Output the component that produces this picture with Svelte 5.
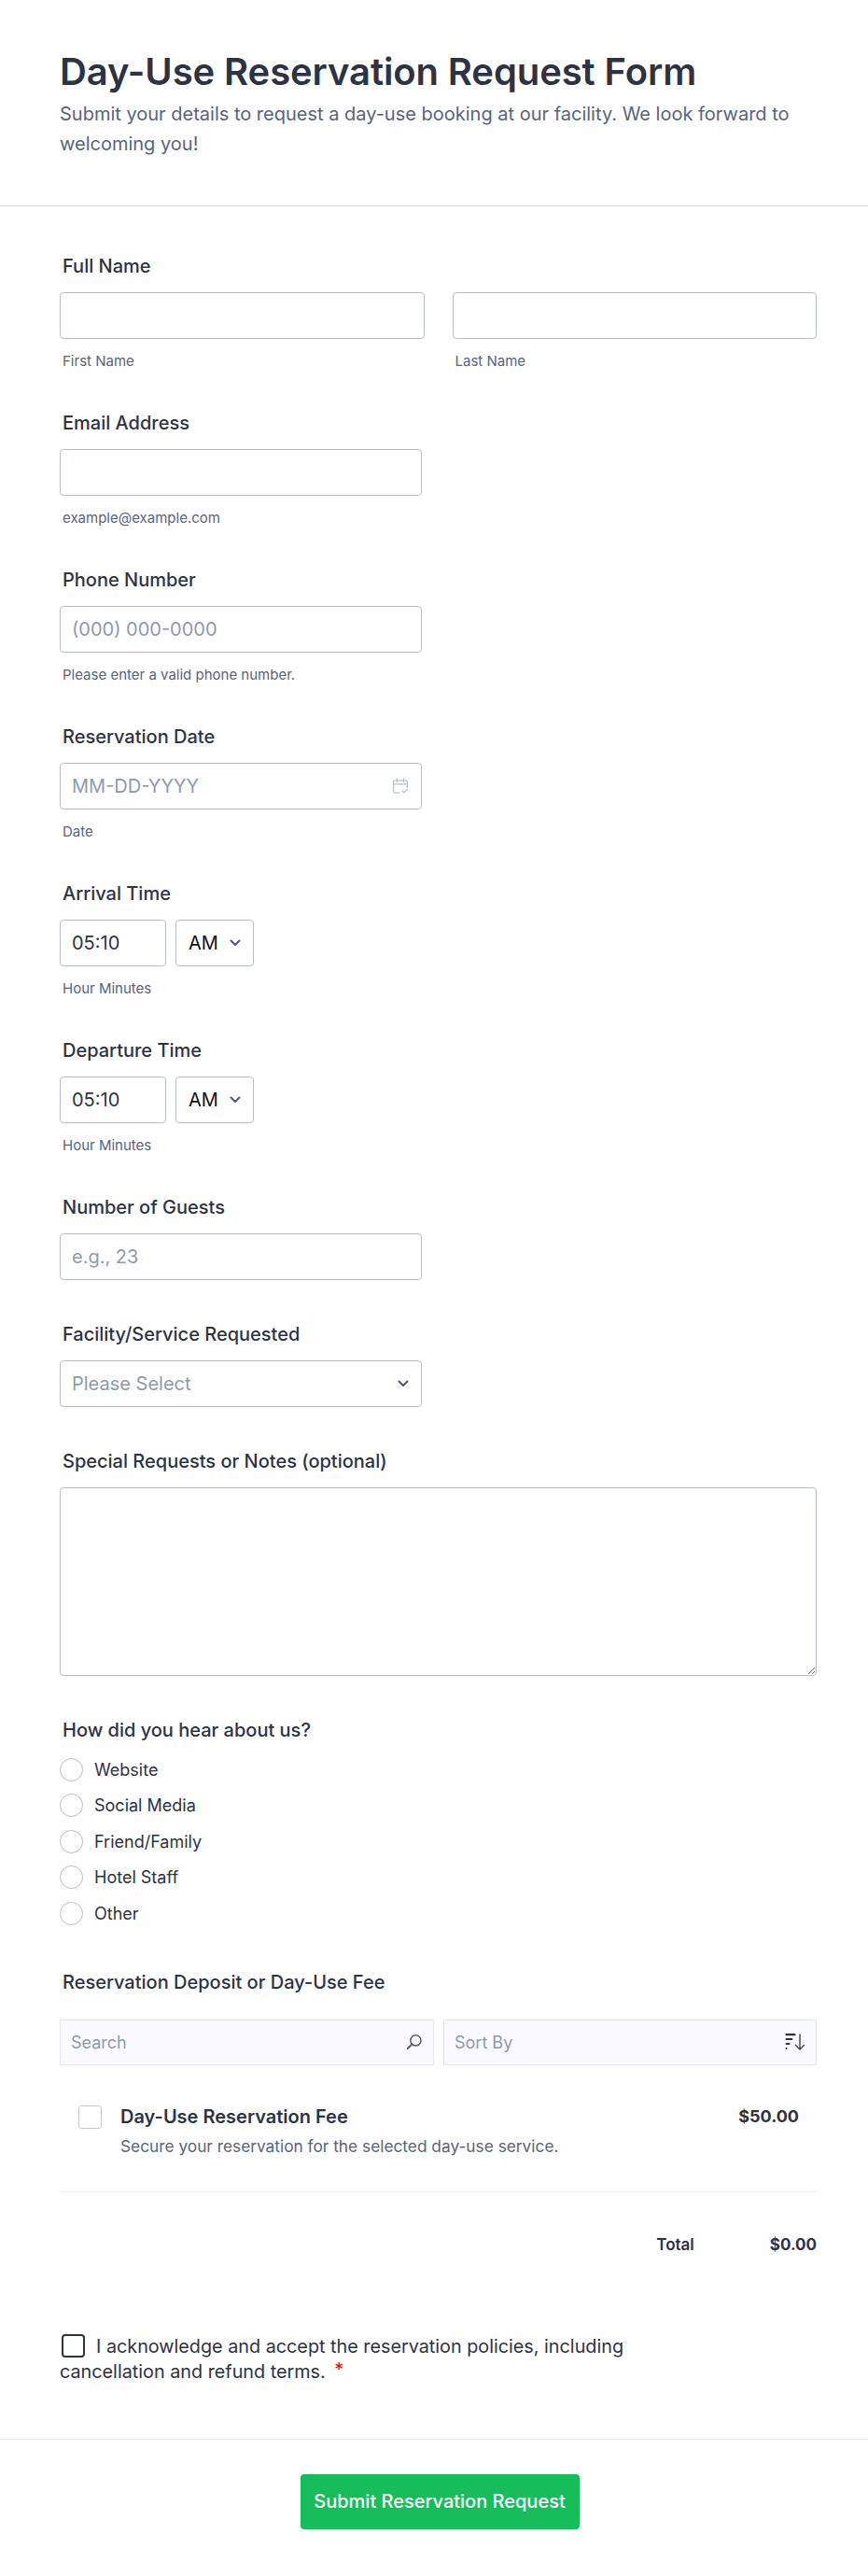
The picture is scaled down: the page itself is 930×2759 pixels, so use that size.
<script>
  const sources = ['Website', 'Social Media', 'Friend/Family', 'Hotel Staff', 'Other'];
  const times = ['Arrival Time', 'Departure Time'];
</script>

<div class="page">
  <header class="head">
    <h1>Day-Use Reservation Request Form</h1>
    <p>Submit your details to request a day-use booking at our facility. We look forward to welcoming you!</p>
  </header>

  <form class="form">
    <div class="field">
      <div class="label">Full Name</div>
      <div class="name-row">
        <div class="name-col">
          <input type="text" />
          <div class="sub">First Name</div>
        </div>
        <div class="name-col">
          <input type="text" />
          <div class="sub">Last Name</div>
        </div>
      </div>
    </div>

    <div class="field">
      <div class="label">Email Address</div>
      <input class="half" type="text" />
      <div class="sub">example@example.com</div>
    </div>

    <div class="field">
      <div class="label">Phone Number</div>
      <input class="half" type="text" placeholder="(000) 000-0000" />
      <div class="sub">Please enter a valid phone number.</div>
    </div>

    <div class="field">
      <div class="label">Reservation Date</div>
      <div class="half wrap">
        <input type="text" placeholder="MM-DD-YYYY" />
        <svg class="cal" width="18" height="18" viewBox="0 0 18 18" fill="none" stroke="#b9c1d0" stroke-width="1.3" stroke-linecap="round" stroke-linejoin="round">
          <path d="M8 16.2H3.2a1.6 1.6 0 0 1-1.6-1.6V4.4a1.6 1.6 0 0 1 1.6-1.6h11.6a1.6 1.6 0 0 1 1.6 1.6v6" />
          <path d="M1.6 6.8h14.8M5.4 1v3.4M12.6 1v3.4" />
          <path d="M11 14l1.8 1.8L16.4 12.6" />
        </svg>
      </div>
      <div class="sub">Date</div>
    </div>

    {#each times as title}
      <div class="field">
        <div class="label">{title}</div>
        <div class="time-row">
          <input class="time" type="text" value="05:10" />
          <div class="ampm wrap">
            <span>AM</span>
            <svg class="chev" width="12" height="8" viewBox="0 0 12 8" fill="none" stroke="#4d5a74" stroke-width="2" stroke-linecap="round" stroke-linejoin="round">
              <path d="M1.5 1.5 6 6l4.5-4.5" />
            </svg>
          </div>
        </div>
        <div class="sub">Hour Minutes</div>
      </div>
    {/each}

    <div class="field">
      <div class="label">Number of Guests</div>
      <input class="half" type="text" placeholder="e.g., 23" />
    </div>

    <div class="field">
      <div class="label">Facility/Service Requested</div>
      <div class="half wrap select">
        <span>Please Select</span>
        <svg class="chev" width="12" height="8" viewBox="0 0 12 8" fill="none" stroke="#4d5a74" stroke-width="2" stroke-linecap="round" stroke-linejoin="round">
          <path d="M1.5 1.5 6 6l4.5-4.5" />
        </svg>
      </div>
    </div>

    <div class="field">
      <div class="label">Special Requests or Notes (optional)</div>
      <textarea></textarea>
    </div>

    <div class="field last-radio">
      <div class="label radio-label">How did you hear about us?</div>
      <div class="radios">
        {#each sources as s}
          <div class="radio"><span class="dot"></span>{s}</div>
        {/each}
      </div>
    </div>

    <div class="field pay">
      <div class="label pay-label">Reservation Deposit or Day-Use Fee</div>
      <div class="tools">
        <div class="tool search">
          <span>Search</span>
          <svg width="18" height="18" viewBox="0 0 18 18" fill="none" stroke="#57606f" stroke-width="1.5" stroke-linecap="round">
            <circle cx="10.4" cy="7.4" r="5.6" />
            <path d="M6.4 11.4 1.8 16" stroke-width="2" />
          </svg>
        </div>
        <div class="tool sort">
          <span>Sort By</span>
          <svg width="22" height="20" viewBox="0 0 22 20" fill="none" stroke="#2c3345" stroke-linecap="round">
            <path d="M1.5 2.2h9" stroke-width="2.2" />
            <path d="M1.5 7h6" stroke-width="2" />
            <path d="M1.5 12h3" stroke-width="2" />
            <path d="M1.5 17h.1" stroke-width="2" />
            <path d="M16 2v16M11.5 13.5 16 18l4.5-4.5" stroke="#3d4657" stroke-width="1.4" stroke-linejoin="round" />
          </svg>
        </div>
      </div>

      <div class="item">
        <span class="box"></span>
        <div class="item-text">
          <div class="item-title">Day-Use Reservation Fee</div>
          <div class="item-desc">Secure your reservation for the selected day-use service.</div>
        </div>
        <div class="price">$50.00</div>
      </div>

      <div class="total">
        <span class="total-label">Total</span>
        <span class="total-val">$0.00</span>
      </div>
    </div>

    <div class="terms">
      <span class="terms-box"></span>I acknowledge and accept the reservation policies, including cancellation and refund terms. <span class="req">*</span>
    </div>
  </form>

  <footer class="foot">
    <button type="button">Submit Reservation Request</button>
  </footer>
</div>

<style>
  :global(body) {
    margin: 0;
    background: #fff;
  }

  .page {
    width: 930px;
    height: 2759px;
    font-family: Inter, 'Noto Sans', sans-serif;
    color: #2c3345;
    overflow: hidden;
  }

  .head {
    box-sizing: border-box;
    height: 221px;
    padding: 52px 64px 0;
    border-bottom: 1px solid #d8dae9;
  }

  h1 {
    margin: 0;
    font-size: 40px;
    line-height: 50px;
    font-weight: 600;
    letter-spacing: -0.1px;
    color: #2c3345;
  }

  .head p {
    margin: 4px 0 0;
    font-size: 20px;
    line-height: 32.4px;
    color: #57647e;
  }

  .form {
    padding: 54px 55px 0 64px;
  }

  .field {
    margin-bottom: 48px;
  }

  .label {
    padding-left: 3px;
    margin-bottom: 18px;
    font-size: 20px;
    line-height: 20px;
    font-weight: 500;
    color: #2c3345;
  }

  input,
  textarea {
    display: block;
    box-sizing: border-box;
    width: 100%;
    height: 50px;
    margin: 0;
    padding: 0 12px;
    border: 1px solid #b8bdc9;
    border-radius: 4px;
    background: #fff;
    font: 20px Inter, sans-serif;
    color: #2c3345;
  }

  input::placeholder {
    color: #8d9ab2;
  }

  .half {
    width: 388px;
  }

  .wrap {
    position: relative;
  }

  .name-row {
    display: flex;
    gap: 30px;
  }

  .name-col {
    flex: 1;
  }

  .sub {
    margin-top: 16px;
    padding-left: 3px;
    font-size: 15px;
    line-height: 16px;
    color: #57647e;
  }

  .cal {
    position: absolute;
    right: 14px;
    top: 16px;
  }

  .time-row {
    display: flex;
    gap: 10px;
  }

  .time {
    width: 114px;
    color: #2c3345;
  }

  .ampm {
    box-sizing: border-box;
    width: 84px;
    height: 50px;
    padding-left: 13px;
    border: 1px solid #b8bdc9;
    border-radius: 4px;
    font-size: 20px;
    line-height: 48px;
    color: #111;
  }

  .chev {
    position: absolute;
    right: 13px;
    top: 20px;
  }

  .select {
    box-sizing: border-box;
    height: 50px;
    padding-left: 12px;
    border: 1px solid #b8bdc9;
    border-radius: 4px;
    font-size: 20px;
    line-height: 48px;
    color: #8d9ab2;
  }

  textarea {
    height: 202px;
    resize: both;
    padding: 12px;
  }

  .last-radio {
    margin-bottom: 51px;
  }

  .radio-label {
    margin-bottom: 20px;
  }

  .radios {
    display: flex;
    flex-direction: column;
    gap: 13.4px;
  }

  .radio {
    display: flex;
    align-items: center;
    height: 25px;
    font-size: 18px;
    color: #2c3345;
  }

  .dot {
    box-sizing: border-box;
    width: 25px;
    height: 25px;
    margin-right: 12px;
    border: 1px solid #b8bdc9;
    border-radius: 50%;
  }

  .pay {
    margin-bottom: 84px;
  }

  .pay-label {
    margin-bottom: 30px;
  }

  .tools {
    display: flex;
    gap: 10px;
  }

  .tool {
    box-sizing: border-box;
    display: flex;
    align-items: center;
    justify-content: space-between;
    height: 49px;
    padding: 0 11px;
    border: 1px solid #e3e8f5;
    background: #f9f9ff;
    font-size: 18px;
    color: #8d9ab2;
  }

  .search {
    width: 401px;
  }

  .sort {
    flex: 1;
  }

  .item {
    display: flex;
    align-items: flex-start;
    padding: 43px 19px 0 20px;
    height: 92px;
    border-bottom: 1px solid #eceef6;
  }

  .box {
    box-sizing: border-box;
    flex: none;
    width: 25px;
    height: 25px;
    margin-right: 20px;
    border: 1px solid #c3cad8;
    border-radius: 3px;
  }

  .item-text {
    flex: 1;
  }

  .item-title {
    font-size: 20px;
    line-height: 24px;
    font-weight: 600;
    color: #2c3345;
  }

  .item-desc {
    margin-top: 8px;
    font-size: 17.3px;
    line-height: 24px;
    color: #57647e;
  }

  .price {
    font-size: 18px;
    line-height: 24px;
    font-weight: 700;
  }

  .total {
    display: flex;
    justify-content: flex-end;
    align-items: center;
    gap: 81px;
    margin-top: 44px;
    height: 24px;
    font-weight: 600;
  }

  .total-label {
    font-size: 17px;
  }

  .total-val {
    font-size: 17px;
    font-weight: 700;
  }

  .terms {
    width: 640px;
    font-size: 19.8px;
    line-height: 27px;
    color: #2c3345;
  }

  .terms-box {
    box-sizing: border-box;
    display: inline-block;
    width: 25px;
    height: 25px;
    margin: 0 12px 0 2px;
    vertical-align: -5px;
    border: 2px solid #2c3345;
    border-radius: 4px;
  }

  .req {
    margin-left: 4px;
    line-height: 1;
    vertical-align: 2px;
    color: #f00;
  }

  .foot {
    margin-top: 58px;
    padding-top: 37px;
    border-top: 1px solid #e3e8f5;
    text-align: center;
  }

  button {
    box-sizing: border-box;
    width: 299px;
    height: 59px;
    margin-left: 12px;
    border: 0;
    border-radius: 4px;
    background: #18bd5b;
    font: 500 20px Inter, sans-serif;
    color: #fff;
  }
</style>
